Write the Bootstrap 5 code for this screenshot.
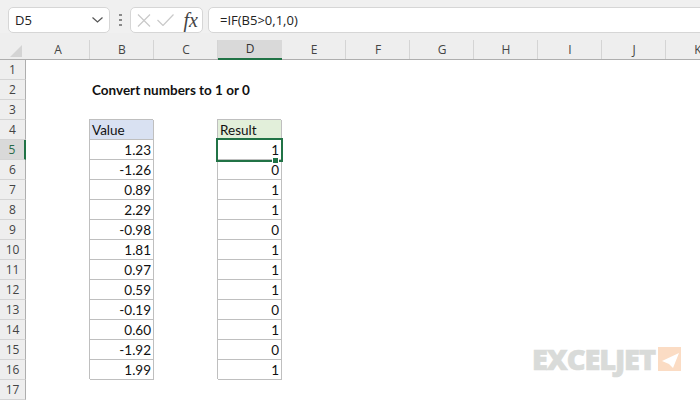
<!DOCTYPE html>
<html lang="en">
<head>
  <meta charset="UTF-8" />
  <title>Convert numbers to 1 or 0</title>
  <link href="https://cdn.jsdelivr.net/npm/bootstrap@5.3.3/dist/css/bootstrap.min.css" rel="stylesheet" />
  <style>
    html, body { width: 700px; height: 400px; overflow: hidden; background: #fff; }
    .xl-top { height: 33px; background: #f0f0f0; padding: 7px 0 0 8px; font: 13px "Open Sans", sans-serif; color: #222; }
    .xl-box { height: 26px; background: #fff; border: 1px solid #d6d6d6; border-radius: 5px; }
    .xl-name { width: 102px; padding: 0 6px 0 6px; }
    .xl-dots { width: 20px; height: 26px; }
    .xl-dots i { display: block; width: 3px; height: 2px; margin: 1.500px 0; background: #8a8a8a; }
    .xl-fx { width: 73px; padding: 0 4px 0 6px; }
    .xl-fxt { font: italic 20px "Liberation Serif", serif; color: #444; margin-left: 3px; }
    .xl-formula { flex: 1; margin-left: 5px; margin-right: -3px; padding-left: 11px; border-radius: 5px 0 0 5px; }
    .xl-sheet { border-collapse: separate; border-spacing: 0; table-layout: fixed; width: 730px; font: 13.500px Lato, sans-serif; color: #111; }
    .xl-sheet th, .xl-sheet td { box-sizing: border-box; padding: 0; }
    .xl-sheet thead th { height: 27px; background: #eeeeee; border-bottom: 1px solid #aeaeae; font: 400 12px "Open Sans", sans-serif; color: #444; text-align: center; vertical-align: bottom; line-height: 19px; position: relative; }
    .xl-sheet thead th.xl-col::after { content: ""; position: absolute; right: 0; top: 7px; bottom: 0; width: 1px; background: #d4d4d4; }
    .xl-sheet thead th.xl-on { background: linear-gradient(#eeeeee 7px, #d9d9d9 7px); border-bottom: 2px solid #217346; color: #333; line-height: 18px; }
    .xl-corner { position: relative; }
    .xl-corner svg { position: absolute; left: 10px; top: 12px; }
    .xl-sheet tbody th { height: 20px; background: #eeeeee; border-right: 1px solid #aeaeae; border-bottom: 1px solid #d4d4d4; font: 400 12px "Open Sans", sans-serif; color: #444; text-align: center; line-height: 19px; }
    .xl-sheet tbody th.xl-on { background: #d9d9d9; border-right: 2px solid #217346; color: #2a6b4a; }
    .xl-sheet td { height: 20px; line-height: 18px; white-space: nowrap; }
    .xl-title { font-weight: 700; padding-left: 2px !important; }
    .xl-cell { text-align: right; padding-right: 3px !important; box-shadow: -1px -1px 0 #bfbfbf, inset -1px -1px 0 #bfbfbf; }
    .xl-hb { text-align: left; padding-left: 2px !important; background: #d9e1f2; }
    .xl-hg { text-align: left; padding-left: 2px !important; background: #e2efda; }
    .xl-sel { position: relative; }
    .xl-sel-box { position: absolute; left: -2px; top: -2px; width: 67px; height: 24px; border: 2px solid #217346; }
    .xl-handle { position: absolute; right: 3px; bottom: -3px; width: 7px; height: 6px; background: #217346; border: 1px solid #fff; border-bottom: 0; }
    .xl-logo { position: absolute; left: 532px; top: 340px; color: #d9dbd9; font: 800 29px/38px "Open Sans", sans-serif; letter-spacing: -1.100px; -webkit-text-stroke: .7px #d9dbd9; }
    .xl-logo svg { margin-left: 3px; }
  </style>
</head>
<body>
  <div class="xl-top d-flex align-items-start">
    <div class="xl-box xl-name d-flex align-items-center justify-content-between">
      <span>D5</span>
      <svg width="11" height="6" viewBox="0 0 11 6"><path d="M.5.5 5.5 5 10.500.5" fill="none" stroke="#555" stroke-width="1.200"/></svg>
    </div>
    <div class="xl-dots d-flex flex-column align-items-center justify-content-center"><i></i><i></i><i></i></div>
    <div class="xl-box xl-fx d-flex align-items-center justify-content-between">
      <svg width="14" height="13" viewBox="0 0 14 13"><path d="M1 .5 13 12.500M13 .5 1 12.500" stroke="#c9c9c9" stroke-width="1.200" fill="none"/></svg>
      <svg width="17" height="12" viewBox="0 0 17 12"><path d="M.5 6 6 11.500 16.500.5" stroke="#c9c9c9" stroke-width="1.200" fill="none"/></svg>
      <span class="xl-fxt">fx</span>
    </div>
    <div class="xl-box xl-formula d-flex align-items-center">=IF(B5&gt;0,1,0)</div>
  </div>

  <table class="xl-sheet">
    <colgroup>
      <col style="width:26px"><col style="width:64px"><col style="width:64px"><col style="width:64px"><col style="width:64px"><col style="width:64px"><col style="width:64px"><col style="width:64px"><col style="width:64px"><col style="width:64px"><col style="width:64px"><col style="width:64px">
    </colgroup>
    <thead>
      <tr>
        <th class="xl-corner"><svg width="12" height="12" viewBox="0 0 12 12"><path d="M12 0V12H0Z" fill="#d4d4d4"/></svg></th>
        <th class="xl-col">A</th><th class="xl-col">B</th><th class="xl-col">C</th><th class="xl-on">D</th><th class="xl-col">E</th><th class="xl-col">F</th><th class="xl-col">G</th><th class="xl-col">H</th><th class="xl-col">I</th><th class="xl-col">J</th><th class="xl-col">K</th>
      </tr>
    </thead>
    <tbody id="rows"></tbody>
  </table>

  <div class="xl-logo d-flex align-items-center">EXCELJET<svg width="23" height="24" viewBox="0 0 23 24"><rect width="23" height="24" fill="#fbdcc4"/><path d="M21 6 4 14 11 17 15 21Z" fill="#fff"/></svg></div>

  <script>
    const values = ['1.23', '-1.26', '0.89', '2.29', '-0.98', '1.81', '0.97', '0.59', '-0.19', '0.60', '-1.92', '1.99'];
    const results = [1, 0, 1, 1, 0, 1, 1, 1, 0, 1, 0, 1];
    let html = '';
    for (let r = 1; r <= 17; r++) {
      let b = '<td></td>', d = '<td></td>';
      if (r === 2) b = '<td class="xl-title"><span class="d-block" style="width:0">Convert&nbsp;numbers&nbsp;to&nbsp;1&nbsp;or&nbsp;0</span></td>';
      if (r === 4) {
        b = '<td class="xl-cell xl-hb">Value</td>';
        d = '<td class="xl-cell xl-hg">Result</td>';
      }
      if (r >= 5 && r <= 16) {
        b = `<td class="xl-cell">${values[r - 5]}</td>`;
        d = `<td class="xl-cell">${results[r - 5]}</td>`;
      }
      if (r === 5) d = '<td class="xl-cell xl-sel">1<div class="xl-sel-box"></div><div class="xl-handle"></div></td>';
      html += `<tr><th class="${r === 5 ? 'xl-on' : ''}">${r}</th><td></td>${b}<td></td>${d}<td></td><td></td><td></td><td></td><td></td><td></td><td></td></tr>`;
    }
    document.getElementById('rows').innerHTML = html;
  </script>
  <script src="https://cdn.jsdelivr.net/npm/bootstrap@5.3.3/dist/js/bootstrap.bundle.min.js"></script>
</body>
</html>
